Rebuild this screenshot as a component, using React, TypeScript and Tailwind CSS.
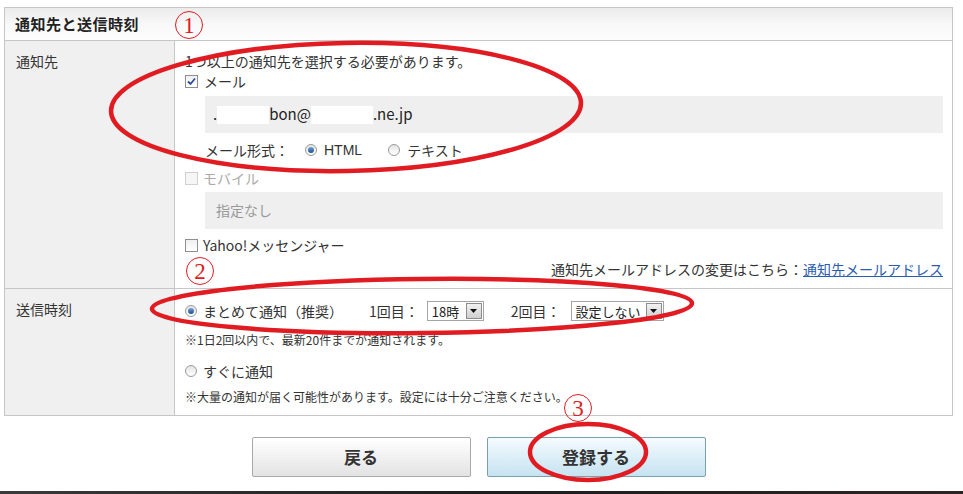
import type { ReactNode } from 'react';

const jp = { fontFamily: '"Noto Sans CJK JP", "Liberation Sans", sans-serif' };
const serif = { fontFamily: '"Liberation Serif", "DejaVu Serif", serif' };

function Checkbox({ checked, disabled }: { checked?: boolean; disabled?: boolean }) {
    return (
        <span
            className={`inline-flex h-[13px] w-[13px] items-center justify-center border ${
                disabled ? 'border-[#d0d0d0] bg-[#f6f6f6]' : 'border-[#8f8f8f] bg-gradient-to-b from-[#f0f0f0] to-white'
            }`}
        >
            {checked && (
                <svg width="9" height="9" viewBox="0 0 9 9">
                    <path d="M1 4.5 L3.5 7 L8 1.5" fill="none" stroke="#2b4a9a" strokeWidth="1.8" />
                </svg>
            )}
        </span>
    );
}

function Radio({ checked }: { checked?: boolean }) {
    return (
        <span className="inline-flex h-[12px] w-[12px] items-center justify-center rounded-full border border-[#9a9a9a] bg-gradient-to-b from-[#e4e4e4] to-white">
            {checked && <span className="h-[6px] w-[6px] rounded-full bg-gradient-to-b from-[#6fa3d6] to-[#1d4f8c]" />}
        </span>
    );
}

function Select({ value, width }: { value: string; width: string }) {
    return (
        <span className={`inline-flex h-[20px] items-center justify-between border border-[#a5a5a5] bg-white pl-[4px] pr-[1px] ${width}`}>
            <span className="text-[13px] text-[#222]">{value}</span>
            <span className="flex h-[16px] w-[16px] items-center justify-center border border-[#8c8c8c] bg-gradient-to-b from-[#f2f2f2] to-[#cfcfcf]">
                <svg width="7" height="4" viewBox="0 0 7 4">
                    <path d="M0 0 L7 0 L3.5 4 Z" fill="#111" />
                </svg>
            </span>
        </span>
    );
}

function Row({ label, children, last }: { label: string; children: ReactNode; last?: boolean }) {
    return (
        <div className={`flex ${last ? '' : 'border-b border-[#c6c6c6]'}`}>
            <div className="w-[170px] shrink-0 border-r border-[#c6c6c6] bg-[#f0f0f0] pl-[11px] pt-[10px]">
                <div className="flex h-[20px] items-center text-[14px] text-[#333]">{label}</div>
            </div>
            <div className="flex-1 pl-[10px] pr-[9px]">{children}</div>
        </div>
    );
}

function Circled({ n, className }: { n: string; className: string }) {
    return (
        <span
            className={`absolute flex h-[28px] w-[28px] items-center justify-center rounded-full border-[1.5px] border-[#e11b22] text-[23px] leading-none text-[#e11b22] ${className}`}
            style={serif}
        >
            {n}
        </span>
    );
}

export default function App() {
    return (
        <div className="relative h-[494px] w-[963px] overflow-hidden bg-white text-[#333]" style={jp}>
            <div className="pl-[4px] pr-[10px] pt-[7px]">
                <div className="border border-[#c6c6c6]">
                    <div className="flex h-[33px] items-center border-b border-[#c6c6c6] bg-gradient-to-b from-[#ebebeb] via-[#f8f8f8] to-[#fdfdfd] pl-[10px]">
                        <span className="text-[15px] font-bold tracking-[0.5px] text-[#222]">通知先と送信時刻</span>
                    </div>

                    <Row label="通知先">
                        <div className="pb-[11px] pt-[10px] text-[14px]">
                            <div className="flex h-[20px] items-center">1つ以上の通知先を選択する必要があります。</div>
                            <label className="flex h-[20px] items-center gap-[6px]">
                                <Checkbox checked />
                                <span>メール</span>
                            </label>
                            <div className="ml-[20px] mt-[5px] flex h-[37px] items-center bg-[#efefef] pl-[8px] text-[15px] text-[#222]">
                                <span>.</span>
                                <span className="inline-block h-[18px] w-[52px] bg-white" />
                                <span>bon@</span>
                                <span className="inline-block h-[18px] w-[62px] bg-white" />
                                <span>.ne.jp</span>
                            </div>
                            <div className="ml-[20px] flex h-[34px] items-center">
                                <span>メール形式：</span>
                                <span className="ml-[16px] flex items-center gap-[7px]">
                                    <Radio checked />
                                    <span style={{ fontFamily: '"Liberation Sans", sans-serif' }}>HTML</span>
                                </span>
                                <span className="ml-[26px] flex items-center gap-[7px]">
                                    <Radio />
                                    <span>テキスト</span>
                                </span>
                            </div>
                            <label className="flex h-[22px] items-center gap-[5px] text-[#aaa]">
                                <Checkbox disabled />
                                <span>モバイル</span>
                            </label>
                            <div className="ml-[20px] mt-[3px] flex h-[37px] items-center bg-[#efefef] pl-[11px] text-[#999]">
                                指定なし
                            </div>
                            <label className="flex h-[32px] items-center gap-[5px]">
                                <Checkbox />
                                <span>Yahoo!メッセンジャー</span>
                            </label>
                            <div className="flex h-[16px] items-center justify-end">
                                <span>通知先メールアドレスの変更はこちら：</span>
                                <a href="#" className="text-[#2a5db0] underline">
                                    通知先メールアドレス
                                </a>
                            </div>
                        </div>
                    </Row>

                    <Row label="送信時刻" last>
                        <div className="pb-[8px] pt-[12px] text-[14px]">
                            <div className="flex h-[20px] items-center">
                                <span className="flex items-center gap-[6px]">
                                    <Radio checked />
                                    <span>まとめて通知（推奨）</span>
                                </span>
                                <span className="ml-[26px]">1回目：</span>
                                <span className="ml-[8px]">
                                    <Select value="18時" width="w-[57px]" />
                                </span>
                                <span className="ml-[27px]">2回目：</span>
                                <span className="ml-[10px]">
                                    <Select value="設定しない" width="w-[93px]" />
                                </span>
                            </div>
                            <div className="mt-[9px] flex h-[20px] items-center text-[12px]">
                                ※1日2回以内で、最新20件までが通知されます。
                            </div>
                            <div className="mt-[11px] flex h-[20px] items-center gap-[6px]">
                                <Radio />
                                <span>すぐに通知</span>
                            </div>
                            <div className="mt-[6px] flex h-[20px] items-center text-[12px]">
                                ※大量の通知が届く可能性があります。設定には十分ご注意ください。
                            </div>
                        </div>
                    </Row>
                </div>

                <div className="mt-[21px] flex justify-center gap-[16px]">
                    <button className="h-[40px] w-[219px] rounded-[2px] border border-[#a9a9a9] bg-gradient-to-b from-white to-[#e3e3e3] text-[17px] font-bold text-[#333]">
                        戻る
                    </button>
                    <button className="h-[40px] w-[219px] rounded-[2px] border border-[#7a9fb0] bg-gradient-to-b from-[#f4fbfe] to-[#c6e3f1] text-[17px] font-bold text-[#333]">
                        登録する
                    </button>
                </div>
            </div>

            <div className="absolute bottom-0 left-0 h-[3px] w-full bg-gradient-to-r from-[#3a3a3a] via-[#1e1e1e] to-[#2c2424]" />

            <svg className="pointer-events-none absolute left-0 top-0" width="963" height="494" viewBox="0 0 963 494">
                <g fill="none" stroke="#e11b22" strokeWidth="4.5">
                    <ellipse cx="346" cy="107" rx="235" ry="64" transform="rotate(-1 346 107)" />
                    <ellipse cx="422" cy="306" rx="270" ry="27" transform="rotate(-0.6 422 306)" />
                    <ellipse cx="588" cy="452" rx="58" ry="28" />
                </g>
            </svg>

            <Circled n="1" className="left-[175px] top-[11px]" />
            <Circled n="2" className="left-[186px] top-[257px]" />
            <Circled n="3" className="left-[564px] top-[394px]" />
        </div>
    );
}
